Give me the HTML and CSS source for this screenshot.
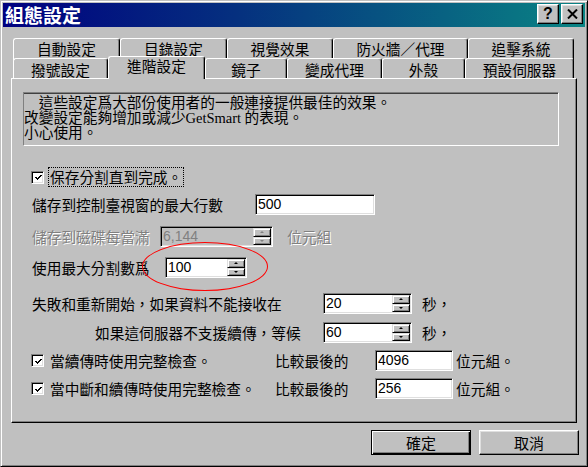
FILE: index.html
```html
<!DOCTYPE html>
<html lang="zh-Hant">
<head>
<meta charset="utf-8">
<title>組態設定</title>
<link rel="stylesheet" href="styles.css">
</head>
<body>
<div class="window">
  <div class="titlebar">
    <span class="title">組態設定</span>
    <div class="title-btns">
      <span class="tbtn help">?</span>
      <span class="tbtn close"><svg width="11" height="10" viewBox="0 0 11 10"><path d="M1 0.5 L10 9.5 M10 0.5 L1 9.5" stroke="#000" stroke-width="2" fill="none"/></svg></span>
    </div>
  </div>

  <div class="tabs">
    <div class="tabrow back">
      <div class="tab b1">自動設定</div>
      <div class="tab b2">目錄設定</div>
      <div class="tab b3">視覺效果</div>
      <div class="tab b4">防火牆／代理</div>
      <div class="tab b5">追擊系統</div>
    </div>
    <div class="tabrow front">
      <div class="tab f1">撥號設定</div>
      <div class="tab f2 selected">進階設定</div>
      <div class="tab f3">鏡子</div>
      <div class="tab f4">變成代理</div>
      <div class="tab f5">外殼</div>
      <div class="tab f6">預設伺服器</div>
    </div>
  </div>

  <div class="panel">
    <div class="desc">
      <div class="dl">　這些設定爲大部份使用者的一般連接提供最佳的效果。</div>
      <div class="dl">改變設定能夠增加或減少<span class="latin">GetSmart</span> 的表現。</div>
      <div class="dl">小心使用。</div>
    </div>

    <div class="row r-a">
      <span class="check"><svg width="7" height="7" viewBox="0 0 7 7"><polyline points="0.5,3 2.5,5 6.5,1" stroke="#000" stroke-width="2" fill="none"/></svg></span>
      <span class="focus">保存分割直到完成。</span>
    </div>

    <div class="row r-b">
      <span class="lbl lb">儲存到控制臺視窗的最大行數</span>
      <span class="edit w120">500</span>
    </div>

    <div class="row r-c disabled">
      <span class="lbl lc">儲存到磁碟每當滿</span>
      <span class="spin w113"><span class="val">6,144</span><span class="arrows"><span class="ab up"></span><span class="ab down"></span></span></span>
      <span class="unit u14">位元組</span>
    </div>

    <div class="row r-d">
      <span class="lbl ld">使用最大分割數爲</span>
      <span class="spin w82"><span class="val">100</span><span class="arrows"><span class="ab up"></span><span class="ab down"></span></span></span>
    </div>

    <div class="row r-e">
      <span class="lbl le">失敗和重新開始，如果資料不能接收在</span>
      <span class="spin w89"><span class="val">20</span><span class="arrows"><span class="ab up"></span><span class="ab down"></span></span></span>
      <span class="unit u10">秒，</span>
    </div>

    <div class="row r-f">
      <span class="lbl lf">如果這伺服器不支援續傳，等候</span>
      <span class="spin w89"><span class="val">60</span><span class="arrows"><span class="ab up"></span><span class="ab down"></span></span></span>
      <span class="unit u10">秒，</span>
    </div>

    <div class="row r-g">
      <span class="check"><svg width="7" height="7" viewBox="0 0 7 7"><polyline points="0.5,3 2.5,5 6.5,1" stroke="#000" stroke-width="2" fill="none"/></svg></span>
      <span class="lbl lg">當續傳時使用完整檢查。</span>
      <span class="lbl lcmp">比較最後的</span>
      <span class="edit w78">4096</span>
      <span class="unit u3">位元組。</span>
    </div>

    <div class="row r-h">
      <span class="check"><svg width="7" height="7" viewBox="0 0 7 7"><polyline points="0.5,3 2.5,5 6.5,1" stroke="#000" stroke-width="2" fill="none"/></svg></span>
      <span class="lbl lg">當中斷和續傳時使用完整檢查。</span>
      <span class="lbl lcmp">比較最後的</span>
      <span class="edit w78">256</span>
      <span class="unit u3">位元組。</span>
    </div>
  </div>

  <div class="footer">
    <button class="btn default">確定</button>
    <button class="btn">取消</button>
  </div>

  <div class="ellipse"></div>
</div>
</body>
</html>
```

FILE: styles.css
```css
* { box-sizing: border-box; }
html, body { margin: 0; padding: 0; }
body {
  width: 588px;
  height: 467px;
  overflow: hidden;
  background: #c0c0c0;
  font-family: "Noto Sans CJK TC", "Noto Sans CJK SC", sans-serif;
  font-size: 14.7px;
  color: #000;
}

.window {
  position: relative;
  width: 588px;
  height: 467px;
  background: #c0c0c0;
  border: 1px solid;
  border-color: #c0c0c0 #000 #000 #c0c0c0;
  box-shadow: inset 1px 1px #fff, inset -1px -1px #808080;
  padding: 2px 2px;
}

/* title bar */
.titlebar {
  height: 24px;
  display: flex;
  align-items: flex-start;
  justify-content: space-between;
  background: linear-gradient(to right, #000080 0%, #05307f 40%, #0a8484 100%);
  padding: 1px 2px 0 2px;
}
.title {
  color: #fff;
  font-weight: bold;
  font-size: 19px;
  line-height: 22px;
}
.title-btns { display: flex; gap: 2px; }
.tbtn {
  width: 22px;
  height: 20px;
  background: #c0c0c0;
  border: 1px solid;
  border-color: #fff #000 #000 #fff;
  box-shadow: inset -1px -1px #808080, inset 1px 1px #dfdfdf;
  display: flex;
  align-items: center;
  justify-content: center;
}
.tbtn.help {
  font-family: "Liberation Sans", sans-serif;
  font-weight: bold;
  font-size: 16px;
  line-height: 16px;
}

/* tabs */
.tabs { margin-top: 11px; padding-left: 10px; }
.tabrow { display: flex; height: 20px; align-items: flex-end; }
.tab {
  height: 22px;
  flex: none;
  background: #c0c0c0;
  border-top: 1px solid #fff;
  border-left: 1px solid #fff;
  border-right: 1px solid #000;
  box-shadow: inset -1px 0 #808080;
  border-radius: 3px 3px 0 0;
  text-align: center;
  line-height: 18px;
  padding-top: 1px;
}
.back .tab { align-self: flex-start; }
.front .tab { height: 20px; line-height: 19px; }
.front .tab.selected {
  height: 23px;
  margin-bottom: -1px;
  position: relative;
  z-index: 2;
  line-height: 18px;
  padding-top: 0;
}
.b1 { width: 107px; }
.b2 { width: 107px; }
.b3 { width: 106px; }
.b4 { width: 135px; }
.b5 { width: 106px; }
.f1 { width: 95px; }
.f2 { width: 97px; }
.f3 { width: 82px; }
.f4 { width: 95px; }
.f5 { width: 83px; }
.f6 { width: 109px; }

/* panel */
.panel {
  margin: 0 8px;
  height: 345px;
  border-top: 1px solid #fff;
  border-left: 1px solid #fff;
  border-right: 1px solid #000;
  border-bottom: 1px solid #000;
  box-shadow: inset -1px -1px #808080;
  padding: 13px 17px 0 11px;
}
.desc {
  height: 54px;
  border: 1px solid;
  border-color: #808080 #fff #fff #808080;
  box-shadow: inset 0 1px #404040;
  padding: 1px 0 0 0;
  white-space: nowrap;
}
.dl { height: 15px; line-height: 15px; }
.latin {
  font-family: "Liberation Serif", serif;
  font-size: 14.5px;
}

.row { display: flex; align-items: center; height: 21px; white-space: nowrap; }
.r-a { margin-top: 21px; height: 20px; margin-left: 8px; }
.r-b { margin-top: 7px; margin-left: 9px; }
.r-c { margin-top: 11px; margin-left: 9px; }
.r-d { margin-top: 10px; margin-left: 9px; }
.r-e { margin-top: 15px; margin-left: 9px; }
.r-f { margin-top: 8px; margin-left: 72px; }
.r-g { margin-top: 7px; margin-left: 8px; }
.r-h { margin-top: 7px; margin-left: 8px; }

.lbl { flex: none; line-height: 18px; }
.lb { width: 223px; }
.lc { width: 128px; }
.ld { width: 133px; }
.le { width: 291px; }
.lf { width: 228px; }
.lg { width: 225px; margin-left: 6px; }
.lcmp { width: 100px; }

.unit { flex: none; line-height: 18px; }
.u14 { margin-left: 14px; }
.u10 { margin-left: 10px; }
.u3 { margin-left: 3px; }

.disabled .lbl, .disabled .unit {
  color: #808080;
  text-shadow: 1px 1px 0 #fff;
}

/* checkbox */
.check {
  flex: none;
  width: 13px;
  height: 13px;
  background: #fff;
  border: 1px solid;
  border-color: #808080 #fff #fff #808080;
  box-shadow: inset 1px 1px #000, inset -1px -1px #dfdfdf;
  display: flex;
  align-items: center;
  justify-content: center;
  padding: 1px 0 0 1px;
}
.check svg { display: block; shape-rendering: crispEdges; }
.focus {
  margin-left: 4px;
  border: 1px dotted #000;
  padding: 0 1px;
  line-height: 18px;
}

/* edit + spin */
.edit, .spin {
  flex: none;
  height: 21px;
  background: #fff;
  border: 1px solid;
  border-color: #808080 #fff #fff #808080;
  box-shadow: inset 1px 1px #000, inset -1px -1px #dfdfdf;
  font-family: "Liberation Sans", sans-serif;
  font-size: 14px;
  line-height: 19px;
  padding-left: 2px;
}
.spin { display: flex; padding: 1px 1px 1px 2px; }
.spin .val { flex: 1; line-height: 17px; }
.w120 { width: 120px; }
.w113 { width: 113px; }
.w82 { width: 82px; }
.w89 { width: 89px; }
.w78 { width: 78px; }

.arrows { display: flex; flex-direction: column; width: 18px; }
.ab {
  flex: 1;
  background: #c0c0c0;
  border: 1px solid;
  border-color: #dfdfdf #000 #000 #dfdfdf;
  box-shadow: inset 1px 1px #fff, inset -1px -1px #808080;
  display: flex;
  align-items: center;
  justify-content: center;
}
.ab::after {
  content: "";
  width: 0;
  height: 0;
  border-left: 2px solid transparent;
  border-right: 2px solid transparent;
}
.ab.up::after { border-bottom: 2px solid #000; }
.ab.down::after { border-top: 2px solid #000; }

.disabled .spin { background: #c0c0c0; color: #808080; }
.disabled .ab.up::after { border-bottom-color: #808080; }
.disabled .ab.down::after { border-top-color: #808080; }

/* footer buttons */
.footer {
  display: flex;
  justify-content: flex-end;
  gap: 8px;
  margin-top: 7px;
  padding-right: 6px;
}
.btn {
  width: 100px;
  height: 25px;
  background: #c0c0c0;
  border: 1px solid;
  border-color: #fff #000 #000 #fff;
  box-shadow: inset -1px -1px #808080, inset 1px 1px #dfdfdf;
  font-family: "Noto Sans CJK TC", sans-serif;
  font-size: 15px;
  line-height: 20px;
  color: #000;
  padding: 0;
}
.btn.default {
  border-color: #000;
  box-shadow: inset 1px 1px #fff, inset -1px -1px #000, inset -2px -2px #808080;
}

/* annotation ellipse */
.ellipse {
  position: absolute;
  left: 141px;
  top: 241px;
  width: 126px;
  height: 49px;
  border: 1px solid #f00;
  border-radius: 50%;
  pointer-events: none;
}
```
